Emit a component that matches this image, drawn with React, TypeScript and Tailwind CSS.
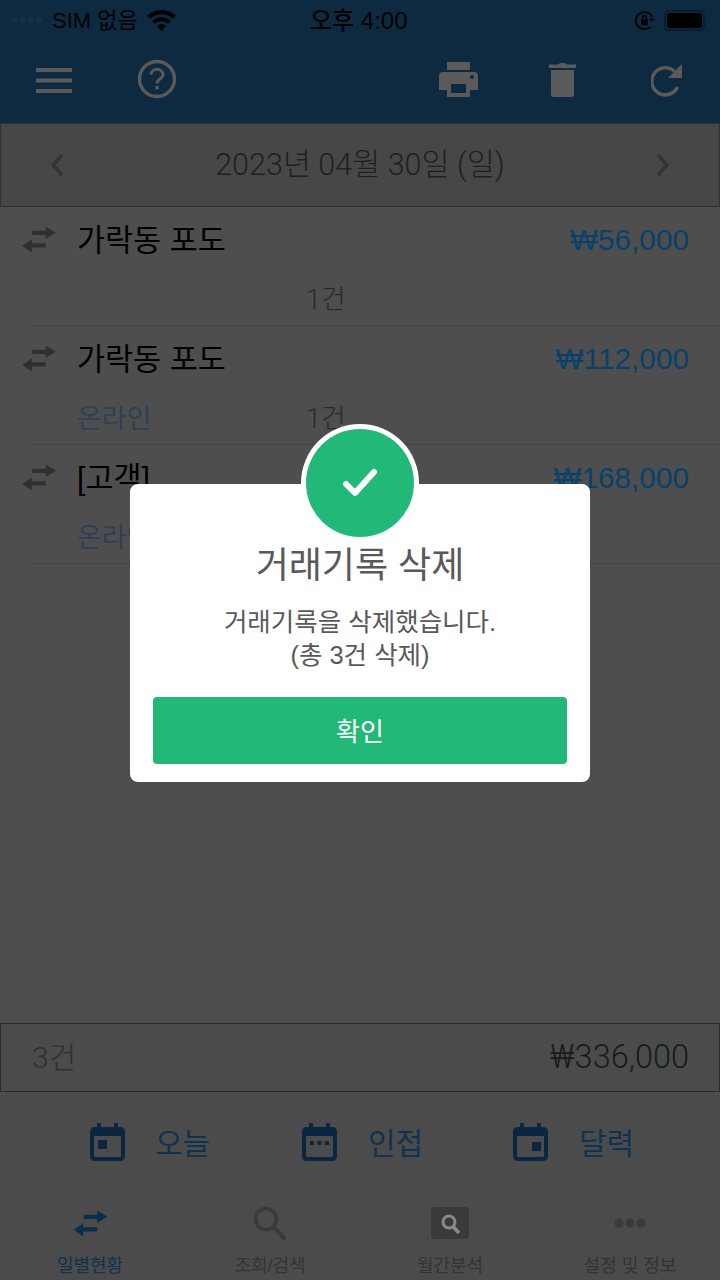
const KR = "font-['Liberation_Sans','Noto_Sans_CJK_KR',sans-serif]";
const THIN = "font-['Roboto','Noto_Sans_CJK_KR',sans-serif] font-light";

function SwapIcon({ className }: { className: string }) {
  return (
    <svg viewBox="0 0 36 28" className={className} fill="currentColor">
      <path d="M25 0.500 L35.500 7 L25 13.500 V9.300 H11 V5 H25 Z" />
      <path d="M10.500 14 V18 H25 V22.300 H10.500 V27.500 L0.500 20.500 Z" />
    </svg>
  );
}

function CalendarIcon({ kind }: { kind: "left" | "dots" | "right" }) {
  return (
    <svg viewBox="0 0 35 38" className="w-[35px] h-[38px] text-[#0a2640]" fill="currentColor">
      <path d="M7 0h4v4h13V0h4v4h2.500a4.500 4.500 0 0 1 4.500 4.500V33.500a4.500 4.500 0 0 1-4.500 4.500H4.500A4.500 4.500 0 0 1 0 33.500V8.500A4.500 4.500 0 0 1 4.500 4H7Z M4 13V32.500a1.500 1.500 0 0 0 1.500 1.500h24a1.500 1.500 0 0 0 1.500-1.500V13Z" fillRule="evenodd" />
      {kind === "left" && <rect x="8" y="17" width="9" height="9" />}
      {kind === "right" && <rect x="19" y="19" width="9" height="9" />}
      {kind === "dots" && (
        <>
          <rect x="8" y="18" width="4" height="4" />
          <rect x="15.500" y="18" width="4" height="4" />
          <rect x="23" y="18" width="4" height="4" />
        </>
      )}
    </svg>
  );
}

function Row({ name, amount, sub, count = true }: { name: string; amount: string; sub?: string; count?: boolean }) {
  return (
    <div className="h-[119px] shrink-0">
      <div className="flex items-center h-[64px] pl-[21px] pr-[31px]">
        <SwapIcon className="w-[36px] h-[27px] text-[#303030] mr-[20px]" />
        <span className="text-[30.500px] text-black flex-1 pt-[4px]">{name}</span>
        <span className="text-[29.750px] text-[#08426a] pt-[3px]">{amount}</span>
      </div>
      <div className="flex items-center h-[54px] pl-[77px] pt-[5px]">
        <span className="w-[229px] text-[27px] text-[#2e4052]">{sub}</span>
        {count && <span className={`text-[27px] text-[#2a2a2a] ${THIN}`}>1건</span>}
      </div>
      <div className="ml-[30px] h-px bg-[#444444]" />
    </div>
  );
}

function Tab({ label, active, children }: { label: string; active?: boolean; children: React.ReactNode }) {
  return (
    <div className="flex flex-col items-center w-[180px]">
      <div className="h-[46px] flex items-center justify-center">{children}</div>
      <span className={`text-[18px] mt-[7px] ${active ? "text-[#103250]" : "text-[#333333]"}`}>{label}</span>
    </div>
  );
}

export default function App() {
  return (
    <div className={`relative w-[720px] h-[1280px] overflow-hidden flex flex-col bg-[#4e4e4e] ${KR}`}>
      {/* header */}
      <div className="bg-[#0e2a40] h-[123px] shrink-0">
        <div className="relative flex items-center justify-between h-[40px] pl-[12px] pr-[15px] text-black">
          <div className="flex items-center">
            <div className="flex gap-[2px] mr-[10px]">
              <span className="w-[6px] h-[6px] rounded-full bg-[#1a2f40]" />
              <span className="w-[6px] h-[6px] rounded-full bg-[#1a2f40]" />
              <span className="w-[6px] h-[6px] rounded-full bg-[#1a2f40]" />
              <span className="w-[6px] h-[6px] rounded-full bg-[#1a2f40]" />
            </div>
            <span className="text-[22px]">SIM 없음</span>
            <svg viewBox="0 0 30 22" className="w-[29px] h-[21px] ml-[9px]" fill="black">
              <path d="M15 0C9 0 4 2.300 0 6l3 3.200C6.300 6.300 10.400 4.500 15 4.500S23.700 6.300 27 9.200L30 6C26 2.300 21 0 15 0Z" />
              <path d="M15 7.500c-3.900 0-7.300 1.500-9.900 3.900l3 3.100c1.800-1.700 4.200-2.700 6.900-2.700s5.100 1 6.900 2.700l3-3.100C22.300 9 18.900 7.500 15 7.500Z" />
              <path d="M15 15c-1.900 0-3.500.7-4.800 1.900L15 22l4.800-5.100C18.500 15.700 16.900 15 15 15Z" />
            </svg>
          </div>
          <span className="absolute left-[310px] top-[3px] text-[24px] font-medium">오후 4:00</span>
          <div className="flex items-center gap-[9px]">
            <svg viewBox="0 0 22 22" className="w-[21px] h-[21px]" fill="none" stroke="black" strokeWidth="2">
              <path d="M17.500 17.500A9 9 0 1 1 19 7" />
              <rect x="7.500" y="10" width="7" height="6" fill="black" stroke="none" />
              <path d="M9 10V8a2 2 0 0 1 4 0v2" strokeWidth="1.500" />
              <path d="M21.500 9 L18.500 12.500 L16 9 Z" fill="black" stroke="none" />
            </svg>
            <div className="w-[41px] h-[21px] rounded-[5px] border-2 border-[#0a1d30] p-px">
              <div className="w-full h-full rounded-[3px] bg-black" />
            </div>
          </div>
        </div>
        <div className="relative h-[83px]">
          <svg viewBox="0 0 36 26" className="absolute left-[36px] top-[27px] w-[36px] h-[26px]" fill="#5a5a5a">
            <rect y="1" width="36" height="4" />
            <rect y="11.500" width="36" height="4" />
            <rect y="22" width="36" height="4" />
          </svg>
          <svg viewBox="0 0 40 40" className="absolute left-[137px] top-[19px] w-[40px] h-[40px]" fill="none" stroke="#5a5a5a">
            <circle cx="20" cy="20" r="17.500" strokeWidth="3.500" />
            <path d="M13.800 15.500a6.300 6.300 0 0 1 12.400 0c0 4.300-6.200 4.300-6.200 9" strokeWidth="3" />
            <rect x="18.400" y="27" width="3.200" height="3.400" fill="#5a5a5a" stroke="none" />
          </svg>
          <svg viewBox="0 0 39 35" className="absolute left-[439px] top-[22px] w-[39px] h-[35px]" fill="#5a5a5a">
            <rect x="8" y="0" width="23" height="8" />
            <path fillRule="evenodd" d="M4 10h31a4 4 0 0 1 4 4v14h-8v7H8v-7H0V14a4 4 0 0 1 4-4Zm8 12v9h15v-9Z" />
            <circle cx="33" cy="15" r="2" fill="#0e2a40" />
          </svg>
          <svg viewBox="0 0 27 35" className="absolute left-[549px] top-[22px] w-[27px] h-[35px]" fill="#5a5a5a">
            <path d="M0 2.500h9C10 .5 17 .5 18 2.500h9V6H0Z" />
            <path d="M2 8h23v24a3 3 0 0 1-3 3H5a3 3 0 0 1-3-3Z" />
          </svg>
          <svg viewBox="0 0 32 34" className="absolute left-[651px] top-[23px] w-[32px] h-[34px]" fill="none" stroke="#5a5a5a">
            <path d="M26.500 24a13.500 13.500 0 1 1-3-15.500" strokeWidth="3.500" />
            <path d="M31 1v14H17Z" fill="#5a5a5a" stroke="none" />
          </svg>
        </div>
      </div>

      {/* date bar */}
      <div className="h-[84px] shrink-0 flex items-center justify-between px-[49px] bg-[#474747] border border-[#303030]">
        <svg viewBox="0 0 14 24" className="w-[14px] h-[24px]" fill="none" stroke="#333333" strokeWidth="3.500">
          <path d="M12 2 L3 12 L12 22" />
        </svg>
        <span className={`text-[30.500px] text-[#202020] ${THIN}`}>2023년 04월 30일 (일)</span>
        <svg viewBox="0 0 14 24" className="w-[14px] h-[24px]" fill="none" stroke="#333333" strokeWidth="3.500">
          <path d="M2 2 L11 12 L2 22" />
        </svg>
      </div>

      {/* list */}
      <div className="flex-1 flex flex-col">
        <Row name="가락동 포도" amount="₩56,000" />
        <Row name="가락동 포도" amount="₩112,000" sub="온라인" />
        <Row name="[고객]" amount="₩168,000" sub="온라인" count={false} />
      </div>

      {/* summary */}
      <div className="h-[69px] shrink-0 flex items-center justify-between pl-[31px] pr-[30px] bg-[#4a4c4c] border border-[#2c2c2c]">
        <span className={`text-[30px] text-[#303030] ${THIN}`}>3건</span>
        <span className={`text-[32.500px] text-[#1a1a1a] ${THIN}`}>₩336,000</span>
      </div>

      {/* quick buttons */}
      <div className="h-[99px] shrink-0 flex items-center bg-[#4b4b4b] pl-[90px]">
        <div className="flex items-center w-[212px]">
          <CalendarIcon kind="left" />
          <span className="ml-[30px] pt-[3px] text-[30px] text-[#103250]">오늘</span>
        </div>
        <div className="flex items-center w-[211px]">
          <CalendarIcon kind="dots" />
          <span className="ml-[31px] pt-[3px] text-[30px] text-[#103250]">인접</span>
        </div>
        <div className="flex items-center">
          <CalendarIcon kind="right" />
          <span className="ml-[31px] pt-[3px] text-[30px] text-[#103250]">달력</span>
        </div>
      </div>

      {/* tabs */}
      <div className="h-[89px] shrink-0 flex bg-[#4b4b4b] pt-[9px]">
        <Tab label="일별현황" active>
          <SwapIcon className="w-[35px] h-[27px] text-[#0a2e4a]" />
        </Tab>
        <Tab label="조회/검색">
          <svg viewBox="0 0 34 34" className="w-[34px] h-[34px]" fill="none" stroke="#3a3a3a">
            <circle cx="13" cy="13" r="10.500" strokeWidth="3.500" />
            <path d="M20.500 21 L32 33" strokeWidth="4" />
          </svg>
        </Tab>
        <Tab label="월간분석">
          <svg viewBox="0 0 38 32" className="w-[38px] h-[32px]">
            <rect width="38" height="32" rx="3" fill="#3a3a3a" />
            <circle cx="18" cy="15" r="6" fill="none" stroke="#8a8a8a" strokeWidth="3" />
            <path d="M22 19.500 L28 26" stroke="#8a8a8a" strokeWidth="3.500" />
          </svg>
        </Tab>
        <Tab label="설정 및 정보">
          <svg viewBox="0 0 32 10" className="w-[32px] h-[10px]" fill="#3a3a3a">
            <circle cx="5" cy="5" r="4.500" />
            <circle cx="16" cy="5" r="4.500" />
            <circle cx="27" cy="5" r="4.500" />
          </svg>
        </Tab>
      </div>

      {/* dialog */}
      <div className="absolute left-[130px] top-[484px] w-[460px] h-[298px] bg-white rounded-[8px] flex flex-col items-center px-[23px] pt-[59px]">
        <div className="absolute left-[171px] top-[-60px] w-[118px] h-[118px] rounded-full bg-white flex items-center justify-center">
          <div className="w-[108px] h-[108px] rounded-full bg-[#22b877] flex items-center justify-center">
            <svg viewBox="0 0 36 30" className="w-[36px] h-[30px]" fill="none" stroke="white" strokeWidth="6" strokeLinecap="round" strokeLinejoin="round">
              <path d="M4 16 L13 25 L32 4" />
            </svg>
          </div>
        </div>
        <h2 className="text-[36px] leading-[46px] text-[#595959]">거래기록 삭제</h2>
        <p className="mt-[17px] text-[25.500px] leading-[33px] text-[#595959] text-center">
          거래기록을 삭제했습니다.
          <br />
          (총 3건 삭제)
        </p>
        <button className="mt-[25px] w-full h-[67px] pt-[3px] rounded-[4px] bg-[#22b877] text-white text-[26px]">확인</button>
      </div>
    </div>
  );
}
